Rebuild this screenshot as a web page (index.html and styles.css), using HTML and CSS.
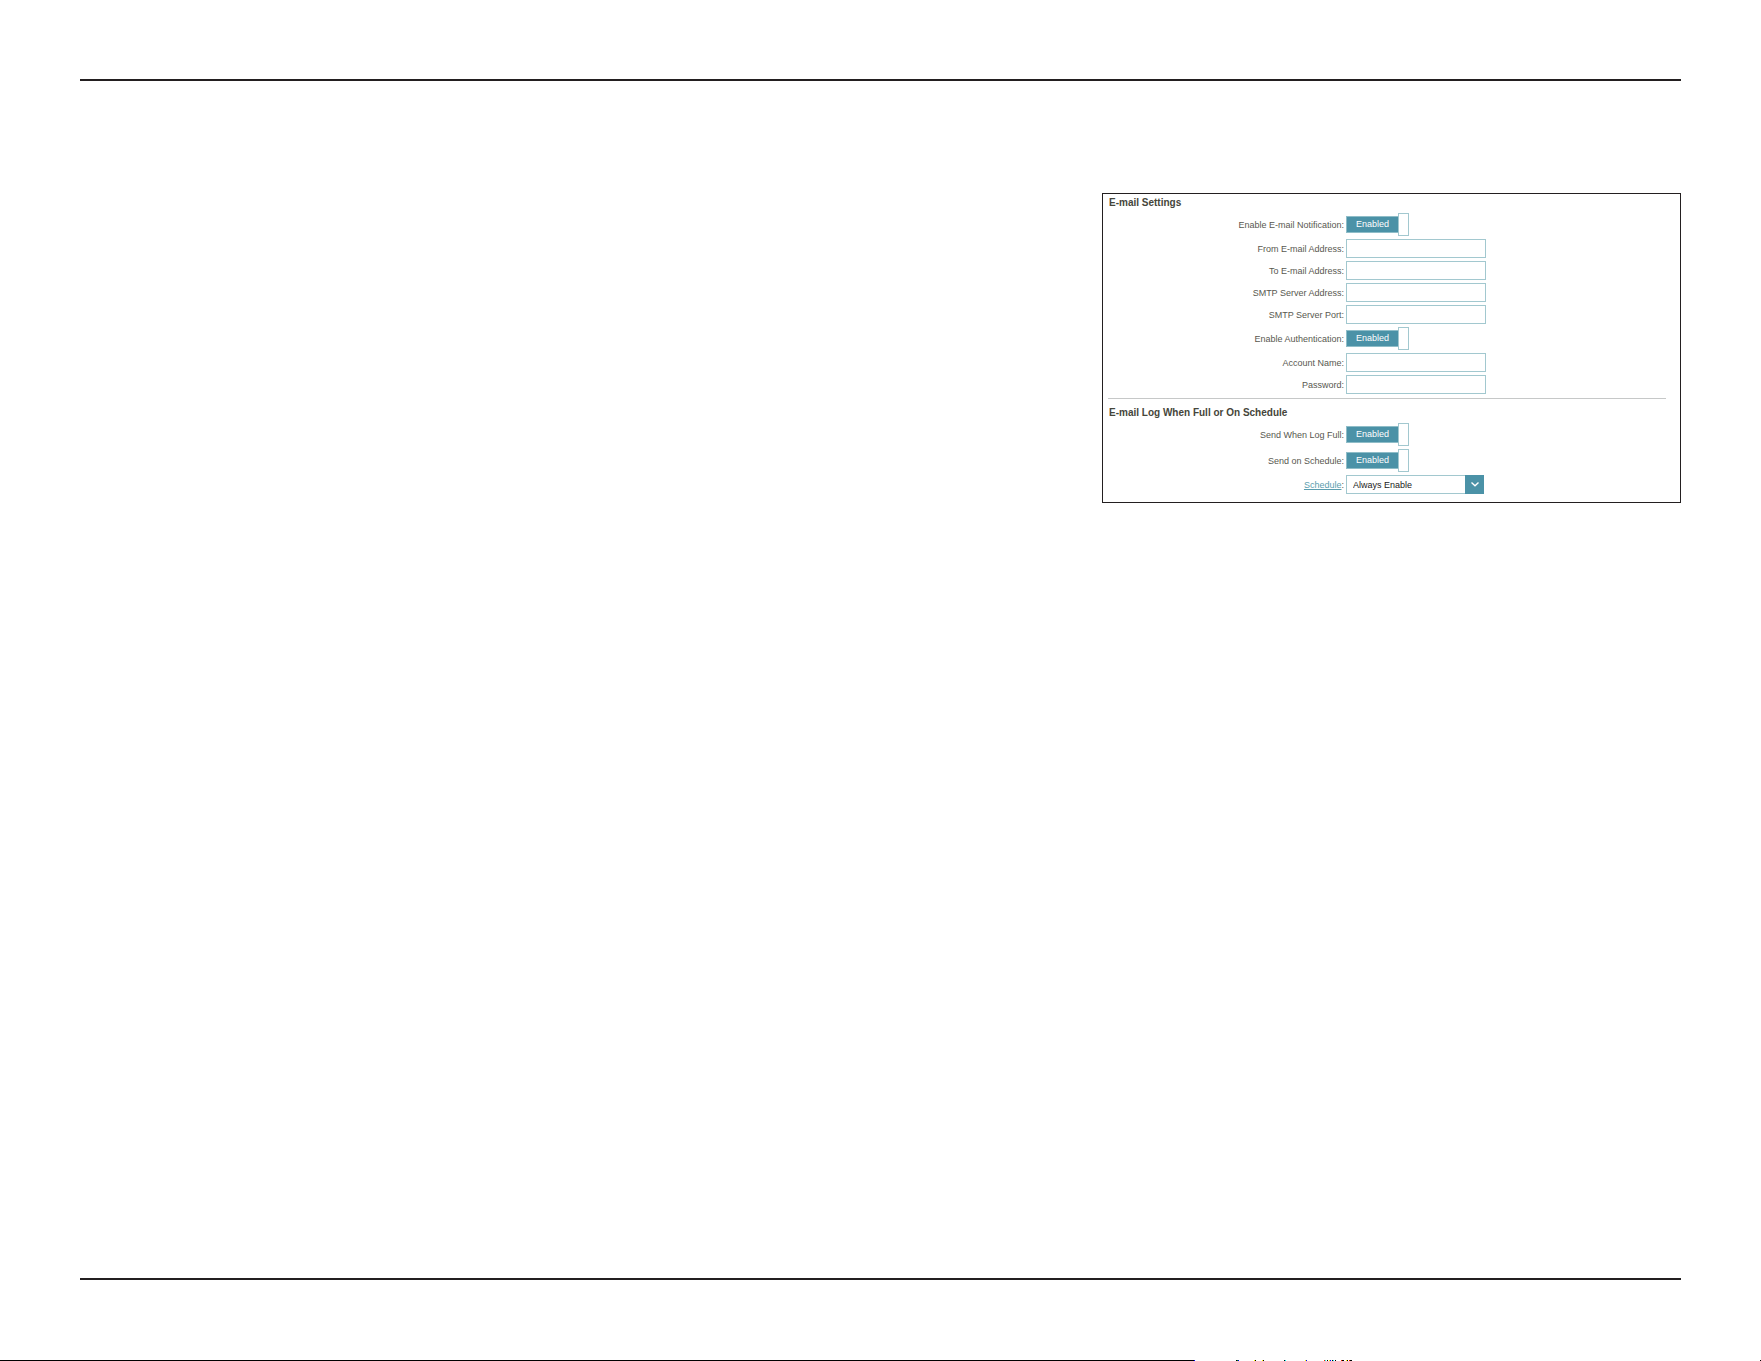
FILE: index.html
```html
<!DOCTYPE html>
<html lang="en">
<head>
<meta charset="utf-8">
<title>E-mail Settings</title>
<link rel="stylesheet" href="styles.css">
</head>
<body>
<header class="page-header"></header>
<main class="page-main">
  <form class="panel">
    <section class="group">
      <h2 class="group-title">E-mail Settings</h2>
      <div class="row"><label class="label" for="notify">Enable E-mail Notification:</label><button class="toggle" id="notify" type="button" aria-pressed="true"><span class="toggle-text">Enabled</span><span class="toggle-knob"></span></button></div>
      <div class="row"><label class="label" for="from">From E-mail Address:</label><input class="field" id="from" type="email"></div>
      <div class="row"><label class="label" for="to">To E-mail Address:</label><input class="field" id="to" type="email"></div>
      <div class="row"><label class="label" for="server">SMTP Server Address:</label><input class="field" id="server" type="text"></div>
      <div class="row"><label class="label" for="port">SMTP Server Port:</label><input class="field" id="port" type="text"></div>
      <div class="row"><label class="label" for="auth">Enable Authentication:</label><button class="toggle" id="auth" type="button" aria-pressed="true"><span class="toggle-text">Enabled</span><span class="toggle-knob"></span></button></div>
      <div class="row"><label class="label" for="account">Account Name:</label><input class="field" id="account" type="text"></div>
      <div class="row"><label class="label" for="password">Password:</label><input class="field" id="password" type="password"></div>
    </section>
    <hr class="divider">
    <section class="group group-log">
      <h2 class="group-title">E-mail Log When Full or On Schedule</h2>
      <div class="row"><label class="label" for="full">Send When Log Full:</label><button class="toggle" id="full" type="button" aria-pressed="true"><span class="toggle-text">Enabled</span><span class="toggle-knob"></span></button></div>
      <div class="row"><label class="label" for="onschedule">Send on Schedule:</label><button class="toggle" id="onschedule" type="button" aria-pressed="true"><span class="toggle-text">Enabled</span><span class="toggle-knob"></span></button></div>
      <div class="row"><label class="label" for="schedule"><a class="link" href="#schedule">Schedule</a>:</label>
        <div class="select-wrap">
          <select class="select" id="schedule"><option>Always Enable</option></select>
          <span class="select-arrow"><svg width="10" height="7" viewBox="0 0 10 7"><path d="M1.5 1.5 5 4.7 8.500 1.500" fill="none" stroke="#fff" stroke-width="1.400"/></svg></span>
        </div>
      </div>
    </section>
  </form>
</main>
<footer class="page-footer">
  <svg class="edge" height="1" shape-rendering="crispEdges" aria-hidden="true">
    <path d="M0 0h1194v1H0zM1236 0h1v1h-1zM1255 0h1v1h-1zM1263 0h1v1h-1zM1284 0h1v1h-1zM1327 0h1v1h-1zM1332 0h1v1h-1zM1335 0h1v1h-1zM1342 0h2v1h-2zM1347 0h1v1h-1zM1350 0h2v1h-2zM1760 0h1v1h-1z" fill="#000"/>
    <path d="M1194 0h1v1h-1zM1238 0h1v1h-1zM1306 0h1v1h-1zM1330 0h1v1h-1z" fill="#00f"/>
    <path d="M1254 0h1v1h-1zM1262 0h1v1h-1zM1305 0h1v1h-1zM1329 0h1v1h-1zM1346 0h1v1h-1z" fill="#ff0"/>
    <path d="M1324 0h1v1h-1zM1341 0h1v1h-1zM1349 0h1v1h-1z" fill="#f20"/>
    <path d="M1285 0h1v1h-1zM1325 0h1v1h-1zM1333 0h1v1h-1z" fill="#0ff"/>
    <path d="M1237 0h1v1h-1z" fill="#080"/>
  </svg>
</footer>
</body>
</html>
```
FILE: styles.css
```css
* { box-sizing: border-box; }
body {
  margin: 0;
  min-height: 100vh;
  display: flex;
  flex-direction: column;
  background: #fff;
  color: #58584f;
  font: 9px/12px "Liberation Sans", Arial, sans-serif;
}
.page-header {
  height: 81px;
  margin: 0 80px;
  border-bottom: 2px solid #231f20;
}
.page-main {
  flex: 1;
  padding: 112px 80px;
}
.panel {
  width: 100%;
  max-width: 579px;
  margin-left: auto;
  padding-bottom: 8px;
  border: 1px solid #231f20;
}
.group {
  display: flex;
  flex-direction: column;
  gap: 3px;
  padding-bottom: 4px;
}
.group-log { padding: 5px 0 0; }
.group-title {
  margin: 0 6px -2px;
  font-size: 10px;
  line-height: 18px;
  color: #45453a;
}
.row {
  display: grid;
  grid-template-columns: 241px 1fr;
  column-gap: 2px;
  align-items: center;
}
.label { text-align: right; }
.link { color: #5a9dae; }
.field, .select {
  height: 19px;
  border: 1px solid #a2c8cf;
  background: #fff;
  font: inherit;
}
.field {
  width: 140px;
  padding: 0 6px;
}
.toggle {
  display: flex;
  align-items: center;
  justify-self: start;
  height: 23px;
  padding: 0;
  border: 0;
  background: none;
  color: #fff;
  font: inherit;
}
.toggle-text {
  width: 52px;
  height: 17px;
  border: 1px solid #8fbdc8;
  border-right: 0;
  background: #4b92a7;
  line-height: 15px;
  text-align: center;
}
.toggle-knob {
  width: 11px;
  height: 23px;
  border: 1px solid #a2c8cf;
  background: #fff;
}
.divider {
  height: 1px;
  margin: 0 14px 0 5px;
  border: 0;
  background: #c6c8c8;
}
.select-wrap {
  display: grid;
  grid-template-columns: 119px 19px;
}
.select {
  appearance: none;
  padding: 0 6px;
  border-right: 0;
  border-radius: 0;
  color: #222;
}
.select-arrow {
  display: flex;
  align-items: center;
  justify-content: center;
  background: #4b92a7;
  pointer-events: none;
}
.page-footer {
  height: 83px;
  display: flex;
  flex-direction: column;
  justify-content: space-between;
}
.page-footer::before {
  content: "";
  height: 2px;
  margin: 0 80px;
  background: #231f20;
}
.edge {
  display: block;
  width: 100%;
}
```
